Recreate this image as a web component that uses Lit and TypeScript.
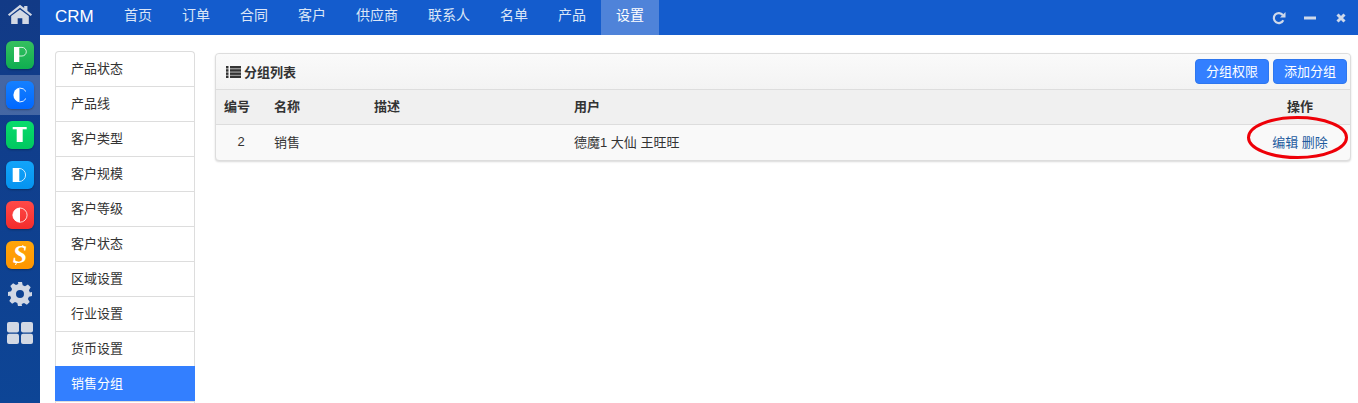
import { LitElement, html, css, svg } from "lit";
import { customElement } from "lit/decorators.js";

const navs = ["首页", "订单", "合同", "客户", "供应商", "联系人", "名单", "产品", "设置"];
const menu = ["产品状态", "产品线", "客户类型", "客户规模", "客户等级", "客户状态", "区域设置", "行业设置", "货币设置", "销售分组", ""];

const apps = [
  { k: "p", bg: "linear-gradient(#35c05f,#0fae50)" },
  { k: "c", bg: "linear-gradient(#1580ff,#0068ff)" },
  { k: "t", bg: "linear-gradient(#08dc6c,#00c860)" },
  { k: "d", bg: "linear-gradient(#12a4fa,#0493f0)" },
  { k: "o", bg: "linear-gradient(#ff4a48,#f42c2c)" },
  { k: "s", bg: "linear-gradient(#ffa50a,#ff9500)" },
];

const glyph = (k: string) => {
  switch (k) {
    case "p":
      return svg`<rect x="8" y="6" width="5.300" height="15" fill="#fff"/><path d="M13 6.400h3a4.300 4.300 0 0 1 0 8.600h-3" fill="none" stroke="#fff" stroke-width=".8"/>`;
    case "c":
      return svg`<path d="M13.500 6.800a7.300 7.300 0 0 0 0 14.400z" fill="#fff"/><path d="M13.500 7a7.300 7.300 0 0 1 6.500 3.500M13.500 21a7.300 7.300 0 0 0 6.500-3.500" fill="none" stroke="#fff" stroke-width=".9"/>`;
    case "t":
      return svg`<rect x="10.700" y="8" width="6" height="13" fill="#fff"/><rect x="6.700" y="6" width="14" height="2.300" fill="#fff"/>`;
    case "d":
      return svg`<rect x="6.700" y="7" width="6.600" height="14" fill="#fff"/><path d="M13 7.400a6.600 6.600 0 0 1 0 13.200" fill="none" stroke="#fff" stroke-width=".8"/>`;
    case "o":
      return svg`<path d="M14 6.800a7.300 7.300 0 0 0 0 14.600z" fill="#fff"/><circle cx="14" cy="14.100" r="7.100" fill="none" stroke="#fff" stroke-width=".8"/>`;
    default:
      return svg`<text class="s" x="14" y="22" text-anchor="middle">S</text><path d="M16.500 4 18.500 7.500M11 20.500 9.500 24" stroke="#fff" stroke-width="1"/>`;
  }
};

@customElement("app-root")
export class AppRoot extends LitElement {
  static styles = css`
    :host { display: block; position: relative; width: 1358px; height: 403px; overflow: hidden; background: #fff;
      font-family: "Liberation Sans", "Noto Sans CJK SC", sans-serif; font-size: 13px; color: #333; }
    .shell { display: flex; height: 403px; }
    .rail { width: 40px; flex: none; background: linear-gradient(#123a86, #0d4596); display: flex; flex-direction: column; }
    .home { height: 35px; box-sizing: border-box; padding-top: 4px; display: flex; align-items: flex-start; justify-content: center; }
    .app { height: 40px; display: flex; align-items: center; justify-content: center; }
    .app.on { background: rgba(255,255,255,.22); }
    .tile { width: 28px; height: 28px; border-radius: 6px; box-shadow: 0 1px 2px rgba(0,0,0,.3); display: block; }
    .s { font: italic 700 26px "Liberation Serif", serif; fill: #fff; }
    .tool { height: 38px; display: flex; align-items: center; justify-content: center; }
    .tool + .tool { height: 40px; }
    .main { flex: 1; min-width: 0; display: flex; flex-direction: column; }
    .top { height: 35px; flex: none; background: #145ccd; color: #fff; display: flex; align-items: stretch; }
    .brand { font-size: 17px; padding: 0 15px; line-height: 34px; width: 39px; }
    .nav { padding: 0 15px; font-size: 14px; line-height: 31px; color: #dbe6f7; }
    .nav.on { background: #4f83d9; color: #fff; }
    .ctl { margin-left: auto; display: flex; align-items: center; gap: 18px; padding-right: 12px; }
    .body { flex: 1; min-height: 0; display: flex; align-items: flex-start; padding: 16px 7px 0 15px; gap: 20px; }
    .menu { width: 140px; flex: none; box-sizing: border-box; border: 1px solid #ddd; border-bottom: 0; border-radius: 4px 4px 0 0; }
    .mi { height: 35px; box-sizing: border-box; border-bottom: 1px solid #ddd; padding-left: 15px; line-height: 34px; }
    .mi.on { height: 36px; background: #337fff; background-clip: padding-box; color: #fff; margin: -1px -1px 0; padding-left: 16px; line-height: 36px; }
    .panel { flex: 1; margin-top: 2px; border: 1px solid #ddd; border-radius: 4px; background: #f9f9f9; box-shadow: 0 1px 2px rgba(0,0,0,.15); }
    .head { height: 36px; box-sizing: border-box; display: flex; align-items: center; padding: 0 3px 0 10px; background: linear-gradient(#fafafa, #f3f3f3); border-bottom: 1px solid #ddd; border-radius: 4px 4px 0 0; }
    .title { font-weight: 700; display: flex; align-items: center; gap: 3px; color: #333; }
    .btns { margin-left: auto; display: flex; gap: 4px; padding-bottom: 1px; }
    .btn { height: 25px; width: 74px; background: #337fff; border: 1px solid #2e77ef; border-radius: 4px; color: #fff; text-align: center; line-height: 24px; box-sizing: border-box; }
    .row { display: grid; grid-template-columns: 50px 100px 200px 1fr 100px; align-items: center; }
    .row > div { padding-left: 8px; }
    .row > div.c { padding-left: 0; text-align: center; }
    .row.th { height: 35px; box-sizing: border-box; padding-bottom: 4px; background: #f0f0f0; border-bottom: 1px solid #ddd; font-weight: 700; }
    .row.td { height: 35px; box-sizing: border-box; padding-bottom: 3px; }
    .link { color: #1d5b9e; }
    .ring { position: absolute; left: 1246px; top: 115px; pointer-events: none; }
  `;

  render() {
    return html`
      <div class="shell">
        <aside class="rail">
          <div class="home">
            <svg width="26" height="20" viewBox="0 0 28 24" preserveAspectRatio="none"><path d="M14 1 1 12.500l1.500 1.800L14 4.500l11.500 9.800 1.500-1.800-5-4.400V2.500h-3.500v2.400z" fill="#d2d8e4"/><path d="M14 6.500 4.500 14.500V24h7v-7h5v7h7v-9.500z" fill="#d2d8e4"/></svg>
          </div>
          ${apps.map(a => html`<div class="app ${a.k === "c" ? "on" : ""}">
            <svg class="tile" style="background:${a.bg}" viewBox="0 0 28 28">${glyph(a.k)}</svg>
          </div>`)}
          <div class="tool">
            <svg width="24" height="24" viewBox="0 0 24 24"><path fill="#d2d8e4" fill-rule="evenodd" d="M10 0h4l.7 3.300 2.300 1 2.900-1.800 2.800 2.800-1.800 2.900 1 2.300L24 10v4l-3.100.7-1 2.300 1.800 2.900-2.800 2.800-2.900-1.800-2.300 1L14 24h-4l-.7-3.100-2.300-1-2.900 1.800-2.800-2.800 1.800-2.900-1-2.300L0 14v-4l3.100-.7 1-2.300L2.300 4.100l2.800-2.800L8 3.100l2.300-1zM12 8a4 4 0 1 0 0 8 4 4 0 0 0 0-8z"/></svg>
          </div>
          <div class="tool">
            <svg width="26" height="22" viewBox="0 0 26 22" fill="#d2d8e4"><rect width="12" height="10.500" rx="2"/><rect x="14" width="12" height="10.500" rx="2"/><rect y="11.800" width="12" height="10.200" rx="2"/><rect x="14" y="11.800" width="12" height="10.200" rx="2"/></svg>
          </div>
        </aside>
        <div class="main">
          <header class="top">
            <div class="brand">CRM</div>
            ${navs.map((n, i) => html`<div class="nav ${i === 8 ? "on" : ""}">${n}</div>`)}
            <div class="ctl">
              <svg width="14" height="14" viewBox="0 0 14 14"><path d="M11.300 9.300a5 5 0 1 1-.5-5.300" fill="none" stroke="#cfd9ea" stroke-width="2.200"/><path d="M13.500 1v5.500H8z" fill="#cfd9ea"/></svg>
              <svg width="12" height="14" viewBox="0 0 12 14"><rect y="5.500" width="12" height="3" fill="#cfd9ea"/></svg>
              <svg width="12" height="14" viewBox="0 0 12 14"><path d="M3.500 3.500l7 7M10.500 3.500l-7 7" stroke="#cfd9ea" stroke-width="3"/></svg>
            </div>
          </header>
          <div class="body">
            <nav class="menu">
              ${menu.map((m, i) => html`<div class="mi ${i === 9 ? "on" : ""}">${m}</div>`)}
            </nav>
            <section class="panel">
              <div class="head">
                <div class="title">
                  <svg width="15" height="12" viewBox="0 0 15 12" fill="#333"><rect y="0" width="2.500" height="2.500"/><rect x="4" y="0" width="11" height="2.500"/><rect y="3.200" width="2.500" height="2.500"/><rect x="4" y="3.200" width="11" height="2.500"/><rect y="6.400" width="2.500" height="2.500"/><rect x="4" y="6.400" width="11" height="2.500"/><rect y="9.500" width="2.500" height="2.500"/><rect x="4" y="9.500" width="11" height="2.500"/></svg>
                  分组列表
                </div>
                <div class="btns"><div class="btn">分组权限</div><div class="btn">添加分组</div></div>
              </div>
              <div class="row th"><div>编号</div><div>名称</div><div>描述</div><div>用户</div><div class="c">操作</div></div>
              <div class="row td"><div class="c">2</div><div>销售</div><div></div><div>德魔1 大仙 王旺旺</div><div class="c link">编辑 删除</div></div>
            </section>
          </div>
        </div>
      </div>
      <svg class="ring" width="104" height="46" viewBox="0 0 104 46"><ellipse cx="51.500" cy="22.500" rx="49" ry="20" fill="none" stroke="#ee0008" stroke-width="3"/></svg>
    `;
  }
}
